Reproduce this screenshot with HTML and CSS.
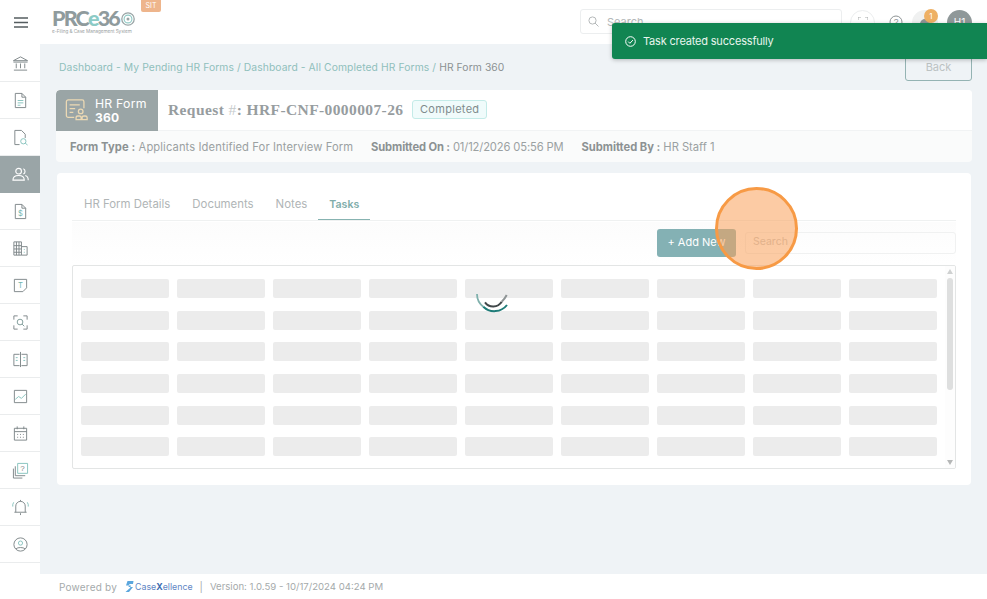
FILE: index.html
```html
<!DOCTYPE html>
<html lang="en">
<head>
<meta charset="utf-8">
<title>HR Form 360</title>
<link rel="stylesheet" href="styles.css">
</head>
<body>
<div class="app">
  <header class="topbar">
    <button class="menu-btn" aria-label="Menu"><svg width="14" height="11" viewBox="0 0 14 11"><path d="M0 1h14M0 5.5h14M0 10h14" stroke="#555d60" stroke-width="1.4"/></svg></button>
    <div class="logo">
      <div class="logo-word"><span class="logo-prc">PRC</span><span class="logo-e">e</span><span class="logo-prc">36</span><svg class="logo-o" width="14" height="16" viewBox="0 0 14 16"><circle cx="7" cy="8" r="6.2" fill="none" stroke="#9aa5a6" stroke-width="1.3"/><circle cx="7" cy="8" r="3.9" fill="none" stroke="#8ec9c4" stroke-width="1.1"/><circle cx="7" cy="8" r="1.5" fill="#9aa5a6"/></svg></div>
      <div class="logo-sub">e-Filing &amp; Case Management System</div>
    </div>
    <span class="env">SIT</span>
    <div class="top-right">
      <div class="top-search"><svg width="11" height="11" viewBox="0 0 11 11"><circle cx="4.5" cy="4.5" r="3.6" fill="none" stroke="#b5b9ba"/><path d="M7 7l3.5 3.5" stroke="#b5b9ba"/></svg><span>Search</span></div>
      <span class="round-btn"><svg width="10" height="10" viewBox="0 0 10 10"><path d="M0 3V0h3M7 0h3v3M10 7v3H7M3 10H0V7" fill="none" stroke="#a9adae"/></svg></span>
      <span class="round-btn plain"><svg width="14" height="14" viewBox="0 0 14 14"><circle cx="7" cy="7" r="6" fill="none" stroke="#8d9394"/><text x="7" y="10" text-anchor="middle" font-size="8.500" fill="#8d9394" font-family="Liberation Sans">?</text></svg></span>
      <span class="round-btn bell"><span class="bell-dot"></span><span class="badge">1</span></span>
      <span class="avatar">H1</span>
    </div>
  </header>
  <div class="body">
    <nav class="sidebar">
      <a class="nav-item"><svg viewBox="0 0 18 18"><path d="M1.5 6L9 2l7.5 4zM2 16h14M1.5 7.5h15M4.5 9v5M9 9v5M13.5 9v5" fill="none" stroke="#7d8688"/></svg></a>
      <a class="nav-item"><svg viewBox="0 0 18 18"><path d="M3.5 1.5h7l4 4v11h-11zM10.5 1.5v4h4" fill="none" stroke="#7d8688"/><path d="M6 9h6M6 11.5h6M6 14h3" stroke="#86c2bd"/></svg></a>
      <a class="nav-item"><svg viewBox="0 0 18 18"><path d="M8 16.5H3V1.5h7l4 4v4" fill="none" stroke="#7d8688"/><circle cx="12" cy="13" r="2.8" fill="none" stroke="#86c2bd"/><path d="M14 15l2.5 2" stroke="#86c2bd"/></svg></a>
      <a class="nav-item active"><svg viewBox="0 0 18 18"><circle cx="7" cy="5.5" r="3" fill="none" stroke="#fff" stroke-width="1.2"/><path d="M1 15c0-3.500 2.500-5 6-5s6 1.500 6 5zM12 3a3 3 0 010 5.500M14 10c2 .5 3.200 2 3.200 5" fill="none" stroke="#fff" stroke-width="1.2"/></svg></a>
      <a class="nav-item"><svg viewBox="0 0 18 18"><path d="M3.500 1.500h7l4 4v11h-11zM10.500 1.500v4h4" fill="none" stroke="#7d8688"/><text x="9" y="13.500" text-anchor="middle" font-size="8" fill="#6fb5ae" font-family="Inter">$</text></svg></a>
      <a class="nav-item"><svg viewBox="0 0 18 18"><path d="M2 2h8v14H2zM10 7h6v9h-6M2 6h8M2 9.500h8M2 13h8M4.700 2v14M7.400 2v14" fill="none" stroke="#7d8688"/><path d="M12.500 10h1M12.500 13h1" stroke="#86c2bd"/></svg></a>
      <a class="nav-item"><svg viewBox="0 0 18 18"><path d="M2.500 2.500h13v9l-4 4h-9z" fill="none" stroke="#7d8688"/><text x="9" y="11.500" text-anchor="middle" font-size="8" fill="#6fb5ae" font-family="Inter">T</text></svg></a>
      <a class="nav-item"><svg viewBox="0 0 18 18"><path d="M2 6V2h4M12 2h4v4M16 12v4h-4M6 16H2v-4" fill="none" stroke="#7d8688"/><circle cx="8.500" cy="8.500" r="3" fill="none" stroke="#7d9a98"/><path d="M10.700 10.700l2.300 2.300" stroke="#7d9a98"/></svg></a>
      <a class="nav-item"><svg viewBox="0 0 18 18"><path d="M8 3.500H2v12h6M10 3.500h6v12h-6M9 1v16" fill="none" stroke="#7d8688"/><path d="M4 7h2M4 10h2M12 7h2M12 10h2" stroke="#86c2bd"/></svg></a>
      <a class="nav-item"><svg viewBox="0 0 18 18"><path d="M2.500 2.500h13v13h-13z" fill="none" stroke="#7d8688"/><path d="M3.500 12l3.500-3 3 2 4.500-4.500" fill="none" stroke="#86c2bd"/></svg></a>
      <a class="nav-item"><svg viewBox="0 0 18 18"><path d="M2.500 3.500h13v12.500h-13zM2.500 7h13M5.500 1.500v3M12.500 1.500v3" fill="none" stroke="#7d8688"/><path d="M5.500 10h1M8.500 10h1M11.500 10h1M5.500 13h1M8.500 13h1M11.500 13h1" stroke="#7d8688"/></svg></a>
      <a class="nav-item"><svg viewBox="0 0 18 18"><path d="M6 1.500h10.500V12H6z" fill="none" stroke="#86c2bd"/><path d="M3.500 4.500V14.500H14M1.500 7v10H11" fill="none" stroke="#7d8688"/><text x="11.200" y="10" text-anchor="middle" font-size="8.500" fill="#7d8688" font-family="Liberation Sans">?</text></svg></a>
      <a class="nav-item"><svg viewBox="0 0 18 18"><path d="M4 14V7.500a5 5 0 0110 0V14M2.500 14h13" fill="none" stroke="#7d8688"/><path d="M9 1v1.500M9 15v2" stroke="#7d8688"/><path d="M1.800 3.500a6 6 0 00-1 4.500M16.200 3.500a6 6 0 011 4.500" fill="none" stroke="#86c2bd"/></svg></a>
      <a class="nav-item"><svg viewBox="0 0 18 18"><circle cx="9" cy="9" r="7" fill="none" stroke="#7d8688"/><circle cx="9" cy="7.500" r="2.200" fill="none" stroke="#86c2bd"/><path d="M4.300 13.500c1.500-1.700 7.900-1.700 9.400 0" fill="none" stroke="#7d8688"/></svg></a>
    </nav>
    <div class="main">
      <main class="content">
        <div class="crumb-row">
          <div class="crumbs">Dashboard - My Pending HR Forms / Dashboard - All Completed HR Forms / <span class="crumb-now">HR Form 360</span></div>
          <button class="back">Back</button>
        </div>
        <section class="form-head">
          <div class="head-top">
            <div class="form-tag">
              <svg width="24" height="24" viewBox="0 0 26 26"><path d="M10 21H3.500a2 2 0 01-2-2V4a2 2 0 012-2h15a2 2 0 012 2v7" fill="none" stroke="#ecd9b4" stroke-width="1.400"/><path d="M5 7.500h11M5 11.500h6M5 15.500h4" stroke="#ecd9b4" stroke-width="1.400"/><circle cx="17" cy="14.500" r="2.500" fill="none" stroke="#ecd9b4" stroke-width="1.400"/><path d="M12 23.500v-2a2 2 0 012-2h1.500a2 2 0 012 2v2zM18.500 23.500v-2a2 2 0 012-2h1.500a2 2 0 012 2v2z" fill="none" stroke="#ecd9b4" stroke-width="1.400"/></svg>
              <div class="tag-text"><div>HR Form</div><strong>360</strong></div>
            </div>
            <h1 class="req">Request <span class="hash">#</span>: HRF-CNF-0000007-26</h1>
            <span class="status">Completed</span>
          </div>
          <div class="head-meta">
            <span class="meta-type"><b>Form Type :</b> Applicants Identified For Interview Form</span>
            <span class="meta-on"><b>Submitted On :</b> 01/12/2026 05:56 PM</span>
            <span class="meta-by"><b>Submitted By :</b> HR Staff 1</span>
          </div>
        </section>
        <section class="panel">
          <div class="tabs">
            <span class="tab">HR Form Details</span>
            <span class="tab">Documents</span>
            <span class="tab">Notes</span>
            <span class="tab on">Tasks</span>
          </div>
          <div class="toolbar">
            <button class="add">+ Add New</button>
            <div class="tool-search">Search</div>
          </div>
          <div class="grid-frame">
            <div class="skeleton">
              <i></i><i></i><i></i><i></i><i></i><i></i><i></i><i></i><i></i>
              <i></i><i></i><i></i><i></i><i></i><i></i><i></i><i></i><i></i>
              <i></i><i></i><i></i><i></i><i></i><i></i><i></i><i></i><i></i>
              <i></i><i></i><i></i><i></i><i></i><i></i><i></i><i></i><i></i>
              <i></i><i></i><i></i><i></i><i></i><i></i><i></i><i></i><i></i>
              <i></i><i></i><i></i><i></i><i></i><i></i><i></i><i></i><i></i>
            </div>
            <div class="scrollbar"><span class="arrow up"></span><span class="thumb"></span><span class="arrow down"></span></div>
            <svg class="spinner" width="36" height="24" viewBox="0 0 36 24"><path d="M2 4A16 16 0 008.300 16.700" fill="none" stroke="#7fb0ac" stroke-width="1.800"/><path d="M8.300 16.700A16 16 0 0032 15" fill="none" stroke="#1f7c78" stroke-width="2"/><path d="M10 12.300A10 10 0 0026.700 11.700" fill="none" stroke="#41484a" stroke-width="2"/><path d="M26.700 11.700Q29.800 8.800 31.700 5" fill="none" stroke="#8f9596" stroke-width="2"/></svg>
          </div>
        </section>
      </main>
      <footer class="footer">
        <span class="powered">Powered by</span>
        <span class="brand"><svg width="9" height="13" viewBox="0 0 9 13"><path d="M8.500 1H2.500L1 5.500h5L5 8 .5 12h3.500L8 7H3.500l1-3h3.500z" fill="#5ba6dd"/></svg><span class="brand-a">Case</span><span class="brand-b">X</span><span class="brand-a">ellence</span></span>
        <span class="sep">|</span>
        <span class="version">Version: 1.0.59 - 10/17/2024 04:24 PM</span>
      </footer>
    </div>
  </div>
</div>
<div class="toast"><svg width="11" height="11" viewBox="0 0 11 11"><circle cx="5.500" cy="5.500" r="4.800" fill="none" stroke="#fff"/><path d="M3.200 5.600l1.700 1.700 3-3.200" fill="none" stroke="#fff"/></svg><span>Task created successfully</span></div>
<div class="click-ring"></div>
</body>
</html>
```
FILE: styles.css
```css
* { box-sizing: border-box; }
html, body { margin: 0; height: 100%; overflow: hidden; }
body { font-family: "Inter", "Liberation Sans", sans-serif; font-size: 11px; color: #8b9192; background: #eff3f6; }
.app { width: 987px; height: 599px; display: flex; flex-direction: column; }

.topbar { height: 44px; background: #fff; display: flex; align-items: flex-start; flex: none; position: relative; }
.menu-btn { width: 42px; height: 44px; border: 0; background: none; padding: 0; display: flex; align-items: center; justify-content: center; }
.logo { margin-left: 10px; width: 90px; padding-top: 9px; }
.logo-word { font-family: "Lato", sans-serif; font-weight: 900; font-size: 21.500px; line-height: 19px; letter-spacing: -1.800px; display: flex; align-items: center; white-space: nowrap; height: 19px; }
.logo-prc { color: #8f9b9d; }
.logo-e { color: #8ccbc6; }
.logo-o { margin-left: 2px; flex: none; }
.logo-sub { font-size: 4.700px; line-height: 5px; margin-top: 1px; color: #9aa1a2; white-space: nowrap; letter-spacing: -.06px; }
.env { position: absolute; left: 141px; top: 0; width: 20px; height: 12px; background: #eeb58c; color: #fff; font-size: 7px; line-height: 11px; text-align: center; border-radius: 0 0 2px 2px; }
.top-right { margin-left: auto; display: flex; align-items: center; height: 44px; }
.top-search { width: 262px; height: 25px; margin-right: 8px; margin-top: -1px; border: 1px solid #eceeef; border-radius: 3px; display: flex; align-items: center; gap: 8px; padding: 0 7px; color: #b4b8b9; font-size: 11px; }
.round-btn { width: 25px; height: 25px; border-radius: 50%; display: flex; align-items: center; justify-content: center; position: relative; border: 1px solid #eceeef; margin-right: 14px; flex: none; }
.round-btn.plain { border: 0; width: 14px; margin-right: 9px; }
.round-btn.bell { background: #f0f1f1; border: 0; width: 26px; margin-right: 9px; }
.bell-dot { width: 10px; height: 10px; background: #8f9596; border-radius: 50% 50% 2px 2px; margin-top: 4px; }
.badge { position: absolute; right: 0; top: -1px; width: 14px; height: 14px; border-radius: 50%; background: #eeb064; color: #fff; font-size: 8px; line-height: 14px; text-align: center; }
.avatar { width: 25px; height: 25px; border-radius: 50%; background: #8f9899; color: #fff; font-size: 10px; line-height: 25px; text-align: center; margin-right: 15px; flex: none; }

.body { flex: 1; display: flex; min-height: 0; }
.sidebar { width: 40px; flex: none; background: #fff; padding-top: 1px; }
.nav-item { height: 37px; display: flex; align-items: center; justify-content: center; border-bottom: 1px solid #eaeced; }
.nav-item svg { width: 17px; height: 17px; }
.nav-item.active { background: #9aa5a7; border-bottom-color: #9aa5a7; }

.main { flex: 1; min-width: 0; display: flex; flex-direction: column; }
.content { flex: 1; min-height: 0; padding: 8px 15px 0 16px; }
.crumb-row { height: 38px; display: flex; align-items: flex-start; justify-content: space-between; }
.crumbs { font-size: 10.300px; line-height: 14px; padding: 8px 0 0 3px; color: #8fc0bc; letter-spacing: .1px; }
.crumb-now { color: #8b9192; }
.back { width: 67px; height: 29px; background: none; border: 1px solid #94b3b3; border-radius: 3px; color: #bcc2c3; font: 11px "Inter", sans-serif; }

.form-head { background: #fafbfb; border-radius: 4px; overflow: hidden; }
.head-top { height: 41px; background: #fff; display: flex; align-items: center; border-bottom: 1px solid #f1f3f4; }
.form-tag { width: 102px; height: 41px; background: #9aa5a6; color: #fff; display: flex; align-items: center; gap: 6px; padding-left: 9px; border-radius: 4px 0 0 0; flex: none; }
.tag-text { font-size: 12.300px; line-height: 14px; letter-spacing: .2px; padding-top: 1px; }
.tag-text strong { display: block; font-weight: 700; font-size: 12px; }
.req { margin: 0 0 0 10px; font-family: "Liberation Serif", serif; font-weight: 700; font-size: 15.500px; color: #979d9f; letter-spacing: .4px; }
.hash { color: #c6cbcc; font-weight: 400; }
.status { margin-left: 9px; height: 19px; padding: 0 6.500px; border: 1px solid #c4ebe8; background: #f0fbfb; border-radius: 3px; font-size: 11px; line-height: 17px; color: #7f8c8d; letter-spacing: .3px; margin-top: -2px; }
.head-meta { height: 31px; display: flex; align-items: center; gap: 18px; padding: 0 14px; font-size: 11.200px; white-space: nowrap; color: #9ba1a2; }
.meta-type { letter-spacing: .1px; }
.meta-on { letter-spacing: -.13px; }
.meta-by { letter-spacing: -.03px; }
.head-meta b { font-weight: 700; color: #8c9293; }

.panel { margin: 11px 1px 0; height: 312px; background: #fff; border-radius: 4px; padding: 17px 15px 0; }
.tabs { height: 31px; display: flex; padding-left: 1px; border-bottom: 1px solid #eff1f1; }
.tab { padding: 7px 11px 0; height: 30px; font-size: 11.400px; color: #b0b5b6; white-space: nowrap; }
.tab.on { color: #7fadaa; font-weight: 600; font-size: 10.600px; padding-top: 8px; border-bottom: 1px solid #87b3b1; }
.toolbar { height: 43px; margin-top: 1px; padding-top: 7px; display: flex; justify-content: flex-end; align-items: flex-start; background: linear-gradient(#fcfcfc, #fff); gap: 9px; }
.add { width: 79px; height: 28px; border: 0; border-radius: 3px; background: #84b1b4; color: #fff; font: 11px "Inter", sans-serif; padding: 0 0 2px; }
.tool-search { width: 211px; height: 22px; margin-top: 3px; border: 1px solid #f0f1f1; border-radius: 3px; padding-left: 7px; line-height: 18px; color: #c4c7c8; font-size: 10.500px; }
.grid-frame { height: 204px; border: 1px solid #e3e5e5; border-radius: 2px; position: relative; overflow: hidden; padding: 13px 0 0 8px; }
.skeleton { display: grid; grid-template-columns: repeat(9, 88px); column-gap: 8px; row-gap: 12.700px; }
.skeleton i { display: block; height: 19px; background: #ececec; border-radius: 2px; }
.scrollbar { position: absolute; right: 0; top: 0; bottom: 0; width: 10px; display: flex; flex-direction: column; align-items: center; background: #fdfdfd; }
.arrow { width: 0; height: 0; border-left: 3px solid transparent; border-right: 3px solid transparent; flex: none; }
.arrow.up { border-bottom: 5px solid #cfd1d1; margin-top: 3px; }
.arrow.down { border-top: 5px solid #b5b7b7; margin-top: auto; margin-bottom: 3px; }
.thumb { width: 6px; height: 112px; margin-top: 4px; background: #dedfdf; border-radius: 3px; flex: none; }
.spinner { position: absolute; left: 402px; top: 24px; }

.footer { height: 25px; flex: none; background: #fff; display: flex; align-items: center; padding-left: 19px; font-size: 10px; color: #a5aaab; white-space: nowrap; }
.powered { letter-spacing: .22px; }
.brand { display: inline-flex; align-items: center; margin-left: 8px; color: #5f86c4; font-size: 8.800px; }
.brand svg { margin-right: 1px; }
.brand-b { color: #3c6bb0; font-weight: 700; }
.sep { margin: 0 7px; }
.version { font-size: 9.600px; }

.toast { position: absolute; left: 612px; top: 23px; width: 375px; height: 36px; background: #118552; border-radius: 3px 0 0 3px; box-shadow: 0 1px 4px rgba(0,0,0,.25); color: #e8f5ee; display: flex; align-items: center; gap: 7px; padding-left: 13px; font-size: 11px; letter-spacing: -.18px; }
.click-ring { position: absolute; left: 715px; top: 187px; width: 83px; height: 83px; border-radius: 50%; background: rgba(250,160,90,.55); border: 3px solid #f79a45; }
```
